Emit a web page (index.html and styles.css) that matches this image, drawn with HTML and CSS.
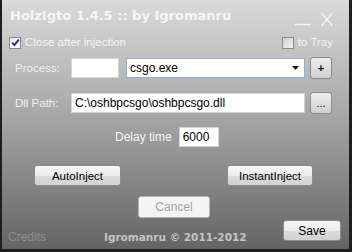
FILE: index.html
```html
<!DOCTYPE html>
<html>
<head>
<meta charset="utf-8">
<link rel="stylesheet" href="styles.css">
</head>
<body>
<div class="win">
  <div class="titlebar">
    <span class="title">HolzIgto 1.4.5 :: by Igromanru</span>
    <svg class="winctl" width="40" height="16" viewBox="0 0 40 16">
      <line x1="0" y1="13.5" x2="16" y2="13.5" stroke="#f2f2f2" stroke-width="1.4"/>
      <line x1="26.5" y1="2" x2="37.5" y2="15" stroke="#f2f2f2" stroke-width="1.3"/>
      <line x1="37.5" y1="2" x2="26.5" y2="15" stroke="#f2f2f2" stroke-width="1.3"/>
    </svg>
  </div>
  <div class="opts">
    <label class="chk">
      <span class="box">
        <svg width="9" height="9" viewBox="0 0 9 9"><path d="M1.2 4.6 L3.4 7 L7.8 1.6" fill="none" stroke="#1c2f8c" stroke-width="1.8"/></svg>
      </span>
      <span class="chktext">Close after injection</span>
    </label>
    <label class="chk tray">
      <span class="box"></span>
      <span class="chktext">to Tray</span>
    </label>
  </div>
  <div class="row field proc">
    <span class="lbl">Process:</span>
    <div class="input pid"></div>
    <div class="combo">
      <span class="val">csgo.exe</span>
      <svg width="7" height="4" viewBox="0 0 7 4"><path d="M0 0 H7 L3.5 4 Z" fill="#111"/></svg>
    </div>
    <div class="btn sq">+</div>
  </div>
  <div class="row field dll">
    <span class="lbl">Dll Path:</span>
    <div class="input path">C:\oshbpcsgo\oshbpcsgo.dll</div>
    <div class="btn sq dots">...</div>
  </div>
  <div class="row delay">
    <span class="dlbl">Delay time</span>
    <div class="input dly">6000</div>
  </div>
  <div class="row inject">
    <div class="btn auto">AutoInject</div>
    <div class="btn instant">InstantInject</div>
  </div>
  <div class="row cancelrow">
    <div class="btn cancel">Cancel</div>
  </div>
  <div class="footer">
    <span class="credits">Credits</span>
    <span class="copy">Igromanru © 2011-2012</span>
    <div class="btn save">Save</div>
  </div>
</div>
</body>
</html>
```
FILE: styles.css
```css
html, body {
  margin: 0;
  padding: 0;
  background: #2a2a2a;
}
.win {
  width: 352px;
  height: 252px;
  box-sizing: border-box;
  border-left: 2px solid #1e1e1e;
  border-right: 3px solid #1e1e1e;
  border-bottom: 3px solid #1e1e1e;
  background: linear-gradient(to bottom, #dadada 0%, #a2a2a2 50%, #646464 100%);
  font-family: "Liberation Sans", Arial, sans-serif;
  font-size: 11px;
  color: #f4f4f4;
  display: flex;
  flex-direction: column;
}
.titlebar {
  height: 30px;
  display: flex;
  align-items: flex-start;
  justify-content: space-between;
  padding: 0 14px 0 8px;
}
.title {
  font-family: "DejaVu Sans", Verdana, sans-serif;
  font-weight: bold;
  font-size: 13px;
  color: #f6f6f6;
  margin-top: 8px;
  line-height: 15px;
}
.winctl {
  margin-top: 11px;
}
.opts {
  margin-top: 6px;
  height: 13px;
  display: flex;
  justify-content: space-between;
  padding: 0 16px 0 7px;
}
.chk {
  display: flex;
  align-items: center;
  gap: 4px;
  font-size: 11.5px;
}
.box {
  width: 12px;
  height: 12px;
  box-sizing: border-box;
  border: 1px solid #8a8a8a;
  background: linear-gradient(to bottom, #e8e8e8, #fbfbfb);
  display: flex;
  align-items: center;
  justify-content: center;
}
.chktext {
  line-height: 13px;
}
.tray .box {
  background: linear-gradient(135deg, #cfcfcf, #f2f2f2);
}
.row {
  display: flex;
  align-items: center;
}
.field {
  height: 20px;
  padding-left: 13px;
}
.proc { margin-top: 9px; }
.dll { margin-top: 15px; }
.lbl {
  width: 56px;
  color: #f0f0f0;
  font-size: 11.5px;
}
.input {
  height: 100%;
  box-sizing: border-box;
  background: #fff;
  border: 1px solid #d4d4d4;
  color: #000;
  display: flex;
  align-items: center;
  padding-left: 3px;
  font-size: 12px;
}
.pid {
  width: 48px;
}
.combo {
  margin-left: 7px;
  width: 179px;
  height: 100%;
  box-sizing: border-box;
  background: #fff;
  border: 1px solid #86b3df;
  color: #000;
  display: flex;
  align-items: center;
  justify-content: space-between;
  padding: 0 5px 0 3px;
  font-size: 12px;
}
.path {
  width: 234px;
}
.btn {
  box-sizing: border-box;
  border: 1px solid #8c8c8c;
  border-radius: 3px;
  background: linear-gradient(to bottom, #f6f6f6 0%, #ececec 50%, #dcdcdc 51%, #d2d2d2 100%);
  color: #000;
  display: flex;
  align-items: center;
  justify-content: center;
  font-size: 11.5px;
}
.sq {
  width: 22px;
  height: 22px;
  margin-left: 5px;
  font-weight: bold;
  font-size: 11px;
  background: linear-gradient(to bottom, #eeeeee, #d0d0d0);
}
.dots {
  font-weight: normal;
  align-items: flex-end;
  padding-bottom: 4px;
}
.delay {
  margin-top: 14px;
  height: 20px;
  padding-left: 113px;
}
.dlbl {
  font-size: 12px;
  color: #f6f6f6;
  margin-right: 7px;
}
.dly {
  width: 40px;
}
.inject {
  margin-top: 18px;
  height: 21px;
  padding-left: 32px;
}
.auto {
  width: 87px;
  height: 21px;
}
.instant {
  width: 86px;
  height: 21px;
  margin-left: 106px;
}
.cancelrow {
  margin-top: 10px;
  height: 22px;
  padding-left: 136px;
}
.cancel {
  width: 72px;
  height: 22px;
  background: #f4f4f4;
  border-color: #b5b5b5;
  color: #a4a4a4;
  font-size: 12px;
}
.footer {
  margin-top: 2px;
  height: 21px;
  display: flex;
  align-items: center;
  padding-left: 6px;
}
.credits {
  color: #8e8e8e;
  font-size: 12px;
  width: 96px;
  margin-top: 12px;
}
.copy {
  font-family: "DejaVu Sans", Verdana, sans-serif;
  font-weight: bold;
  font-size: 10.5px;
  color: #c4c4c4;
  margin-top: 12px;
  width: 179px;
}
.save {
  width: 58px;
  height: 21px;
  font-size: 12px;
}
```
